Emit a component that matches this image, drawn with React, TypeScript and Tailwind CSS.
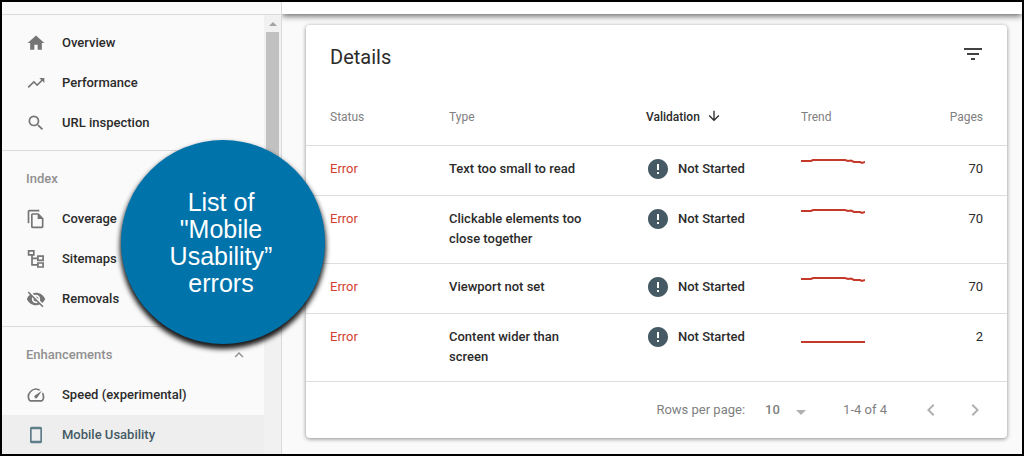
import React from "react";
import type { IconType } from "react-icons";
import {
  MdArrowDownward,
  MdArrowDropDown,
  MdChevronLeft,
  MdChevronRight,
  MdError,
  MdFilterList,
  MdHome,
  MdKeyboardArrowUp,
  MdOutlineFileCopy,
  MdSearch,
  MdTrendingUp,
  MdVisibilityOff,
} from "react-icons/md";

function SitemapIcon({ className }: { className?: string }) {
  return (
    <svg viewBox="0 0 20 20" className={className} fill="none" stroke="currentColor" strokeWidth="1.7" aria-hidden="true">
      <path d="M2.600 1.900h5.200v4h-5.200z M11.900 7.200h5.200v4.200h-5.200z M11.900 14h5.200v4h-5.200z M6 6v9.800h5.500 M6 9.300h5.500" />
    </svg>
  );
}

function PhoneIcon({ className }: { className?: string }) {
  return (
    <svg viewBox="0 0 20 20" className={className} fill="currentColor" fillRule="evenodd" aria-hidden="true">
      <path d="M5.500 1.700h9a1.500 1.500 0 0 1 1.500 1.500v13.600a1.500 1.500 0 0 1-1.500 1.500h-9a1.500 1.500 0 0 1-1.500-1.500V3.200a1.500 1.500 0 0 1 1.500-1.500z M5.700 4.200v11.600h8.600V4.200z" />
    </svg>
  );
}

function SpeedIcon({ className }: { className?: string }) {
  return (
    <svg viewBox="0 0 24 24" className={className} fill="currentColor" aria-hidden="true">
      <path d="M20.380 8.570l-1.230 1.850a8 8 0 0 1-.22 7.580H5.070A8 8 0 0 1 15.580 6.850l1.850-1.230A10 10 0 0 0 3.350 19a2 2 0 0 0 1.720 1h13.850a2 2 0 0 0 1.740-1 10 10 0 0 0-.27-10.440z" />
      <path d="M10.590 15.410a2 2 0 0 0 2.830 0l5.660-8.490-8.490 5.660a2 2 0 0 0 0 2.830z" />
    </svg>
  );
}

type NavIcon = IconType | typeof SpeedIcon;

function NavItem({ icon: Icon, label, active = false }: { icon: NavIcon; label: string; active?: boolean }) {
  return (
    <li>
      <a
        href="#"
        aria-current={active ? "page" : undefined}
        className={
          active
            ? "flex h-10 items-center gap-4 bg-[#eeeeee] pl-6 text-[#455a64]"
            : "flex h-10 items-center gap-4 pl-6 text-[#2b2b2b]"
        }
      >
        <Icon className={active ? "size-5 text-[#607d8b]" : "size-5 text-[#757575]"} />
        <span>{label}</span>
      </a>
    </li>
  );
}

const steadyThenDip = "M0 2H10L12 1H44L47 2L50 1.500L53 3H59L61 4L64 3";

const rows = [
  { type: "Text too small to read", trend: steadyThenDip, pages: 70 },
  { type: "Clickable elements too close together", trend: steadyThenDip, pages: 70 },
  { type: "Viewport not set", trend: steadyThenDip, pages: 70 },
  { type: "Content wider than screen", trend: "M0 15H64", pages: 2 },
];

function Sidebar() {
  return (
    <aside className="flex w-[280px] shrink-0 flex-col border-r border-[#dadada] bg-[#fafafa] text-[13px] font-medium">
      <div className="h-[13px] shrink-0 border-b border-[#dadada]" />
      <div className="flex min-h-0 flex-1">
        <nav className="min-w-0 flex-1 overflow-hidden">
          <ul className="border-b border-[#dadada] pt-2 pb-[7px]">
            <NavItem icon={MdHome} label="Overview" />
            <NavItem icon={MdTrendingUp} label="Performance" />
            <NavItem icon={MdSearch} label="URL inspection" />
          </ul>
          <div className="border-b border-[#dadada] pt-2 pb-[7px]">
            <h2 className="flex h-10 items-center pl-6 text-[#909090]">Index</h2>
            <ul>
              <NavItem icon={MdOutlineFileCopy} label="Coverage" />
              <NavItem icon={SitemapIcon} label="Sitemaps" />
              <NavItem icon={MdVisibilityOff} label="Removals" />
            </ul>
          </div>
          <div className="pt-2">
            <h2>
              <button className="flex h-10 w-full items-center justify-between pr-4 pl-6 text-[#909090]" aria-expanded="true">
                Enhancements
                <MdKeyboardArrowUp className="size-[18px]" />
              </button>
            </h2>
            <ul>
              <NavItem icon={SpeedIcon} label="Speed (experimental)" />
              <NavItem icon={PhoneIcon} label="Mobile Usability" active />
            </ul>
          </div>
        </nav>
        <div className="flex w-[17px] flex-col items-center bg-[#f1f1f1]" aria-hidden="true">
          <div className="flex h-[17px] items-center justify-center">
            <svg viewBox="0 0 8 4" className="h-1 w-2" fill="#a3a3a3">
              <path d="M4 0l4 4H0z" />
            </svg>
          </div>
          <div className="h-72 w-[13px] bg-[#c1c1c1]" />
        </div>
      </div>
    </aside>
  );
}

function DetailsCard() {
  return (
    <section className="rounded-sm bg-white shadow-[0_1px_4px_rgba(0,0,0,0.45)]">
      <header className="flex h-16 items-start justify-between pt-[17px] pr-[22px] pl-6">
        <h1 className="text-xl leading-[30px] text-[#2b2b2b]">Details</h1>
        <button aria-label="Filter">
          <MdFilterList className="size-6 text-[#424242]" />
        </button>
      </header>
      <table className="w-full table-fixed border-separate border-spacing-0 text-left text-[13px] text-[#2b2b2b]">
        <colgroup>
          <col className="w-[143px]" />
          <col className="w-[197px]" />
          <col className="w-[155px]" />
          <col />
          <col className="w-[90px]" />
        </colgroup>
        <thead>
          <tr className="h-[57px] text-xs text-[#808080] [&>th]:border-b [&>th]:border-[#dedede] [&>th]:font-normal">
            <th className="pl-6">Status</th>
            <th>Type</th>
            <th>
              <button className="flex items-center gap-1.5 font-medium text-[#2b2b2b]">
                Validation
                <MdArrowDownward className="mb-0.5 size-4" />
              </button>
            </th>
            <th>Trend</th>
            <th className="pr-6 text-right">Pages</th>
          </tr>
        </thead>
        <tbody>
          {rows.map((row) => (
            <tr
              key={row.type}
              className="h-[50px] align-top leading-5 [&>td]:border-b [&>td]:border-[#dedede] [&>td]:pt-[13px] [&>td]:pb-[14px]"
            >
              <td className="pl-6 text-[#d23f31]">Error</td>
              <td className="pr-14 font-medium">{row.type}</td>
              <td className="font-medium">
                <div className="flex h-5 items-center gap-2">
                  <MdError className="size-6 text-[#455a64]" />
                  Not Started
                </div>
              </td>
              <td>
                <svg viewBox="0 0 64 20" className="h-5 w-16" fill="none" stroke="#c5392a" strokeWidth="2" role="img" aria-label="Trend">
                  <path d={row.trend} />
                </svg>
              </td>
              <td className="pr-6 text-right">{row.pages}</td>
            </tr>
          ))}
        </tbody>
      </table>
      <footer className="flex h-14 items-center justify-end pr-5 text-[13px] text-[#808080]">
        <label htmlFor="rows-per-page">Rows per page:</label>
        <div className="relative ml-5 flex items-center">
          <select id="rows-per-page" className="w-11 appearance-none bg-transparent font-medium" defaultValue="10">
            <option>10</option>
            <option>25</option>
          </select>
          <MdArrowDropDown className="pointer-events-none absolute top-0 -right-1 size-6 text-[#b0b0b0]" />
        </div>
        <span className="ml-[34px]">1-4 of 4</span>
        <button aria-label="Previous page" className="ml-8">
          <MdChevronLeft className="size-6 text-[#b0b0b0]" />
        </button>
        <button aria-label="Next page" className="ml-5">
          <MdChevronRight className="size-6 text-[#b0b0b0]" />
        </button>
      </footer>
    </section>
  );
}

export default function App() {
  return (
    <div className="relative flex h-screen overflow-hidden border-2 border-black bg-[#fafafa] font-['Roboto',sans-serif]">
      <Sidebar />
      <main className="flex min-w-0 flex-1 flex-col overflow-hidden">
        <div className="h-3 shrink-0 bg-white shadow-[0_2px_6px_rgba(0,0,0,0.6)]" />
        <div className="pt-[11px] pr-[15px] pl-6">
          <DetailsCard />
        </div>
      </main>
      <div className="absolute top-[138px] left-[119px] flex size-[204px] items-center justify-center rounded-full bg-[#0073ab] pt-0.5 pr-11 pl-10 text-center font-['Liberation_Sans',sans-serif] text-[25px] leading-[27px] text-white shadow-[0_4px_5px_1px_rgba(0,0,0,0.9)]">
        List of &quot;Mobile Usability” errors
      </div>
    </div>
  );
}
